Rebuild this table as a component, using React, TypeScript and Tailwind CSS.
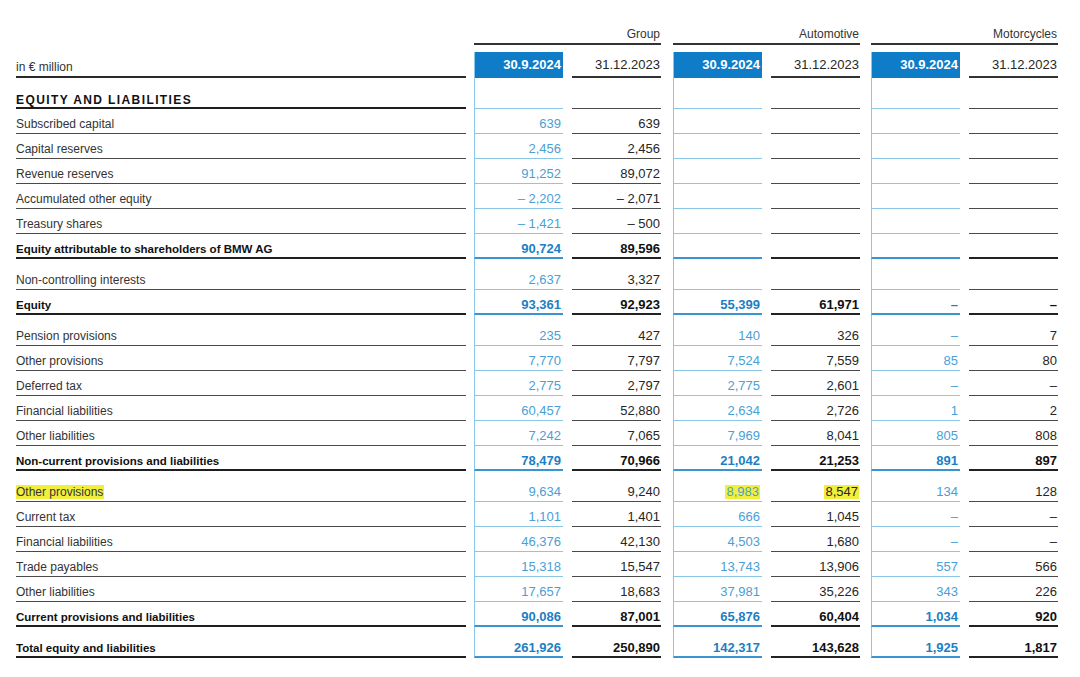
import React from "react";
import clsx from "clsx";

type Row = {
  label: string;
  bold?: boolean;
  hlLabel?: boolean;
  values: string[];
  hl?: number[];
  gapBefore?: boolean;
};

const ML = ["ml-[8px]", "ml-[9px]", "ml-[12px]", "ml-[9px]", "ml-[11px]", "ml-[9px]"];

const rows: Row[] = [
  { label: "Subscribed capital", values: ["639", "639", "", "", "", ""] },
  { label: "Capital reserves", values: ["2,456", "2,456", "", "", "", ""] },
  { label: "Revenue reserves", values: ["91,252", "89,072", "", "", "", ""] },
  { label: "Accumulated other equity", values: ["– 2,202", "– 2,071", "", "", "", ""] },
  { label: "Treasury shares", values: ["– 1,421", "– 500", "", "", "", ""] },
  { label: "Equity attributable to shareholders of BMW AG", bold: true, values: ["90,724", "89,596", "", "", "", ""] },
  { label: "Non-controlling interests", gapBefore: true, values: ["2,637", "3,327", "", "", "", ""] },
  { label: "Equity", bold: true, values: ["93,361", "92,923", "55,399", "61,971", "–", "–"] },
  { label: "Pension provisions", gapBefore: true, values: ["235", "427", "140", "326", "–", "7"] },
  { label: "Other provisions", values: ["7,770", "7,797", "7,524", "7,559", "85", "80"] },
  { label: "Deferred tax", values: ["2,775", "2,797", "2,775", "2,601", "–", "–"] },
  { label: "Financial liabilities", values: ["60,457", "52,880", "2,634", "2,726", "1", "2"] },
  { label: "Other liabilities", values: ["7,242", "7,065", "7,969", "8,041", "805", "808"] },
  { label: "Non-current provisions and liabilities", bold: true, values: ["78,479", "70,966", "21,042", "21,253", "891", "897"] },
  { label: "Other provisions", gapBefore: true, hlLabel: true, hl: [2, 3], values: ["9,634", "9,240", "8,983", "8,547", "134", "128"] },
  { label: "Current tax", values: ["1,101", "1,401", "666", "1,045", "–", "–"] },
  { label: "Financial liabilities", values: ["46,376", "42,130", "4,503", "1,680", "–", "–"] },
  { label: "Trade payables", values: ["15,318", "15,547", "13,743", "13,906", "557", "566"] },
  { label: "Other liabilities", values: ["17,657", "18,683", "37,981", "35,226", "343", "226"] },
  { label: "Current provisions and liabilities", bold: true, values: ["90,086", "87,001", "65,876", "60,404", "1,034", "920"] },
  { label: "Total equity and liabilities", bold: true, gapBefore: true, values: ["261,926", "250,890", "142,317", "143,628", "1,925", "1,817"] },
];

function Cell({ i, value, bold, hl }: { i: number; value: string; bold?: boolean; hl?: boolean }) {
  const blue = i % 2 === 0;
  return (
    <div
      className={clsx(
        "w-[89px] h-full flex items-end justify-end text-[13px] leading-[14px]",
        ML[i],
        blue ? "border-l border-l-[#8cc6e6] pr-[2px]" : "pr-[1px]",
        blue && !bold && "border-b border-b-[#8cc6e6] pb-[2px] text-[#4aa0d6]",
        blue && bold && "border-b-2 border-b-[#3a94d2] pb-[1px] text-[#1c7fc4] font-bold",
        !blue && !bold && "border-b border-b-[#4a4a4a] pb-[2px] text-[#262626]",
        !blue && bold && "border-b-2 border-b-[#222] pb-[1px] text-[#111] font-bold"
      )}
    >
      {hl ? <span className="bg-[#f2ef3c] px-[1px]">{value}</span> : value}
    </div>
  );
}

function GapRow() {
  return (
    <div className="flex h-[6px]">
      <div className="w-[450px]" />
      {[0, 1, 2, 3, 4, 5].map((i) => (
        <div key={i} className={clsx("w-[89px] h-full", ML[i], i % 2 === 0 && "border-l border-l-[#8cc6e6]")} />
      ))}
    </div>
  );
}

function DataRow({ row }: { row: Row }) {
  return (
    <div className="flex h-[25px]">
      <div
        className={clsx(
          "w-[450px] flex items-end leading-[14px]",
          row.bold
            ? "border-b-2 border-b-[#1e1e1e] pb-[1px] text-[11.5px] font-bold text-[#111]"
            : "border-b border-b-[#4a4a4a] pb-[2px] text-[12px] text-[#333]"
        )}
      >
        {row.hlLabel ? <span className="bg-[#f2ef3c] pr-[1px]">{row.label}</span> : row.label}
      </div>
      {row.values.map((v, i) => (
        <Cell key={i} i={i} value={v} bold={row.bold} hl={row.hl?.includes(i)} />
      ))}
    </div>
  );
}

export default function App() {
  return (
    <div className="w-[1080px] h-[677px] bg-white pt-[21px] pl-[16px] font-['Liberation_Sans',Arial,sans-serif] overflow-hidden">
      {/* group header row */}
      <div className="flex h-[24px]">
        <div className="w-[450px]" />
        <div className="ml-[8px] w-[187px] flex items-end justify-end border-b-2 border-b-[#333] pb-[2px] pr-[1px] text-[12px] leading-[14px] text-[#333]">
          Group
        </div>
        <div className="ml-[12px] w-[187px] flex items-end justify-end border-b-2 border-b-[#333] pb-[2px] pr-[1px] text-[12px] leading-[14px] text-[#333]">
          Automotive
        </div>
        <div className="ml-[11px] w-[187px] flex items-end justify-end border-b-2 border-b-[#333] pb-[2px] pr-[1px] text-[12px] leading-[14px] text-[#333]">
          Motorcycles
        </div>
      </div>
      {/* date header row */}
      <div className="flex h-[33px]">
        <div className="w-[450px] flex items-end border-b-2 border-b-[#2a2a2a] pb-[2px] text-[12px] leading-[14px] text-[#333]">
          in € million
        </div>
        {[0, 1, 2, 3, 4, 5].map((i) =>
          i % 2 === 0 ? (
            <div key={i} className={clsx("w-[89px] h-full flex items-end", ML[i])}>
              <div className="w-full h-[26px] bg-[#0f7cc8] border-l border-l-[#8cc6e6] flex items-center justify-end pr-[2px] text-[13px] leading-[14px] font-bold text-white">
                30.9.2024
              </div>
            </div>
          ) : (
            <div
              key={i}
              className={clsx(
                "w-[89px] h-full flex items-end justify-end border-b-2 border-b-[#333] pb-[4px] pr-[1px] text-[13px] leading-[14px] text-[#262626]",
                ML[i]
              )}
            >
              31.12.2023
            </div>
          )
        )}
      </div>
      {/* section header */}
      <div className="flex h-[31px]">
        <div className="w-[450px] flex items-end border-b-2 border-b-[#1e1e1e] pb-0 text-[12px] leading-[14px] font-bold tracking-[1.4px] text-[#111]">
          EQUITY AND LIABILITIES
        </div>
        {[0, 1, 2, 3, 4, 5].map((i) => (
          <Cell key={i} i={i} value="" />
        ))}
      </div>
      {rows.map((r, idx) => (
        <React.Fragment key={idx}>
          {r.gapBefore && <GapRow />}
          <DataRow row={r} />
        </React.Fragment>
      ))}
    </div>
  );
}
